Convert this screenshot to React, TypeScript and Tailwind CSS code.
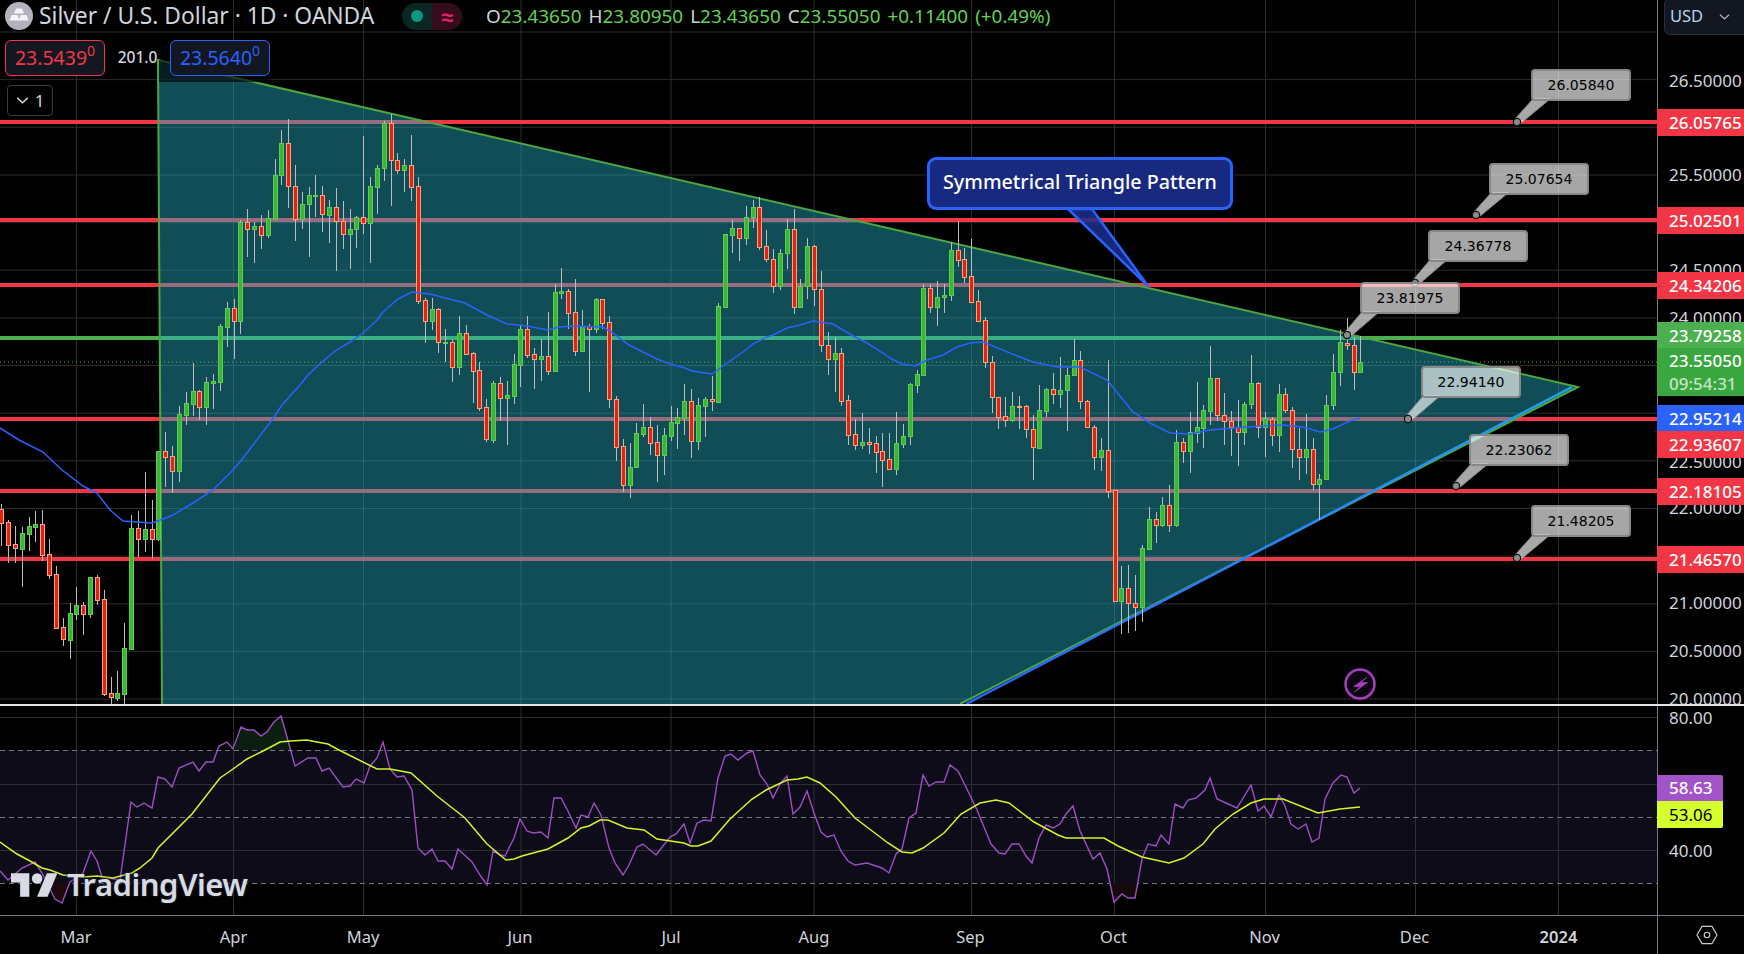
import React from "react";

// [wickTop, bodyTop, bodyBottom, wickBottom, isUp]
const candles: number[][] = [
[504,509,523,546,0],[520,522,545,563,0],[526,544,548,563,0],[527,533,549,587,1],[517,526,534,551,1],[511,524,527,542,1],[510,524,555,561,0],[539,554,575,579,0],[566,574,628,628,0],[618,627,639,646,0],
[603,613,640,659,1],[587,605,614,620,1],[602,605,614,635,0],[577,577,614,618,1],[575,577,600,605,0],[590,599,694,696,0],[677,693,697,705,0],[671,693,698,701,1],[623,648,694,705,1],[515,528,649,649,1],
[511,528,539,557,0],[472,529,539,552,1],[500,529,539,559,0],[451,451,539,541,1],[432,451,457,487,0],[446,456,471,493,0],[406,414,471,482,1],[392,403,415,425,1],[363,391,404,416,1],[390,391,407,420,0],
[377,382,407,425,1],[374,381,383,409,1],[324,326,382,391,1],[302,308,327,347,1],[299,308,321,359,0],[220,222,321,334,1],[209,222,229,257,0],[222,226,229,263,1],[215,226,235,249,0],[210,218,235,238,1],
[159,175,219,219,1],[130,143,175,185,1],[119,143,186,208,0],[165,186,219,241,0],[192,204,219,229,1],[187,195,204,257,1],[175,195,196,217,1],[186,195,214,232,0],[200,207,215,243,1],[188,207,221,271,0],
[201,221,234,249,0],[209,229,234,269,1],[216,217,229,248,1],[136,217,223,234,0],[177,186,223,263,1],[165,168,187,214,1],[121,123,168,181,1],[114,123,160,206,0],[153,160,170,174,0],[159,165,170,192,1],
[135,165,187,201,0],[177,186,301,304,0],[298,300,321,343,0],[298,309,321,330,1],[308,309,342,353,0],[329,342,343,362,1],[340,342,367,382,0],[316,333,367,375,1],[325,333,354,355,0],[352,353,371,403,0],
[362,370,408,411,0],[399,407,439,442,0],[381,383,440,443,1],[377,383,398,421,0],[381,395,398,445,1],[354,364,396,404,1],[325,329,365,387,1],[316,329,355,358,0],[348,354,359,389,0],[339,356,359,381,1],
[312,356,371,375,0],[284,292,371,372,1],[268,291,293,299,1],[289,291,313,329,0],[279,312,351,356,0],[310,326,351,351,1],[324,326,329,392,0],[298,299,329,333,1],[299,299,323,329,0],[316,322,399,408,0],
[396,399,447,461,0],[439,446,485,492,0],[443,467,485,498,1],[423,433,467,467,1],[404,427,434,437,1],[417,427,443,455,0],[425,442,455,482,0],[428,435,455,475,1],[406,422,436,441,1],[408,417,423,449,1],
[384,401,418,435,1],[389,401,441,458,0],[398,405,441,450,1],[397,399,406,437,1],[376,399,401,411,0],[303,306,402,402,1],[234,234,307,308,1],[220,228,235,253,1],[228,228,238,261,0],[206,217,238,245,1],
[200,207,217,228,1],[197,207,247,250,0],[230,246,259,262,0],[249,259,286,293,0],[249,253,286,290,1],[219,229,253,269,1],[209,229,307,314,0],[279,286,307,307,1],[238,246,286,299,1],[245,246,289,306,0],
[271,289,345,352,0],[332,345,359,375,0],[337,353,359,392,1],[348,353,401,406,0],[395,400,435,445,0],[419,434,445,450,0],[413,442,445,449,1],[428,442,444,454,0],[436,443,452,473,0],[433,451,460,487,0],
[433,459,469,469,0],[412,443,469,475,1],[424,436,444,448,1],[383,384,436,445,1],[370,374,385,393,1],[284,288,375,376,1],[284,288,307,313,0],[281,297,307,326,1],[284,295,297,313,1],[242,250,295,301,1],
[221,250,260,267,0],[248,259,277,283,0],[239,276,302,303,0],[290,301,321,322,0],[317,320,362,368,0],[356,362,397,413,0],[397,397,417,429,0],[397,416,420,427,0],[392,406,420,422,1],[396,406,407,429,0],
[405,406,429,438,0],[415,429,447,480,0],[385,410,448,449,1],[388,389,411,417,1],[373,389,394,404,0],[357,390,394,408,1],[368,375,390,431,1],[339,360,375,376,1],[351,360,401,409,0],[400,401,427,427,0],
[425,427,457,470,0],[438,450,457,471,1],[360,450,491,498,0],[490,490,601,601,0],[566,588,601,634,1],[565,588,603,633,0],[575,603,607,631,0],[545,548,607,622,1],[507,519,549,549,1],[512,519,525,543,0],
[497,505,525,527,1],[485,505,525,532,0],[430,442,525,527,1],[438,442,451,463,0],[412,432,451,473,1],[382,427,433,443,1],[405,410,428,448,1],[346,378,411,425,1],[378,378,415,421,0],[393,415,421,445,0],
[411,421,427,456,0],[400,427,432,466,0],[402,404,432,445,1],[355,383,404,409,1],[382,383,427,438,0],[412,418,427,457,1],[417,419,435,446,0],[384,394,435,452,1],[388,394,410,413,0],[407,410,449,468,0],
[428,449,457,480,0],[414,449,457,474,1],[438,449,484,490,0],[474,479,484,520,1],[395,405,479,479,1],[354,372,405,410,1],[330,342,372,386,1],[318,343,345,350,0],[337,345,372,390,0],[336,362,372,373,1],
];

const ma = "0,428 19,440 43,452 62,470 83,486 97,493 110,510 123,521 152,523 163,519 173,515 193,503 213,490 230,473 240,462 272,420 282,405 300,385 308,375 322,362 335,351 350,342 363,333 377,320 383,312 398,299 412,292 430,294 453,300 465,303 487,315 507,324 527,326 548,330 560,327 573,326 603,327 613,333 629,345 657,359 670,364 685,368 692,371 712,374 730,361 743,352 753,344 767,337 773,335 787,328 800,325 813,321 833,324 853,336 867,343 883,353 890,358 902,364 915,366 927,360 943,355 957,347 970,343 983,342 1020,357 1033,362 1057,367 1080,367 1107,380 1133,412 1150,423 1170,433 1190,434 1210,430 1247,427 1283,425 1303,427 1320,432 1333,429 1350,421 1360,418";

const rsi = "0,871 8,880 22,868 35,862 42,873 55,899 62,903 70,882 83,873 91,851 97,861 102,877 120,880 131,802 137,807 144,803 152,808 158,777 165,779 172,787 179,768 193,762 199,771 206,762 213,762 219,746 227,742 233,749 241,727 247,730 254,730 261,736 267,732 274,722 281,716 287,737 295,766 308,758 316,758 322,771 329,768 343,787 350,786 356,779 364,783 370,766 377,758 383,742 390,769 397,777 404,776 412,790 418,848 425,855 432,849 438,861 445,861 452,869 458,849 472,862 480,875 487,885 493,851 500,855 505,856 514,838 520,819 527,831 533,833 541,832 548,838 554,798 561,798 568,811 576,828 581,815 588,817 594,803 601,815 609,848 615,863 623,875 629,865 637,847 643,844 656,855 670,837 676,834 684,824 690,843 697,823 704,820 711,821 718,778 725,756 731,754 738,760 747,753 753,751 760,775 767,784 773,798 780,784 787,776 793,814 800,807 807,791 814,813 821,832 827,837 834,835 841,851 848,861 855,865 867,863 882,868 889,873 896,854 902,849 909,818 916,813 923,775 929,786 936,782 944,782 950,765 958,771 965,785 977,810 991,844 999,853 1005,854 1012,844 1019,844 1026,856 1032,863 1039,838 1046,825 1053,828 1060,824 1066,814 1073,806 1080,831 1093,859 1100,853 1107,869 1114,902 1122,894 1128,898 1135,898 1142,859 1148,844 1156,846 1161,835 1169,844 1175,804 1183,808 1188,800 1196,798 1205,790 1210,778 1217,799 1226,803 1237,808 1251,785 1258,811 1264,806 1271,817 1279,795 1285,806 1291,824 1298,829 1306,824 1312,842 1319,838 1325,799 1333,783 1341,775 1347,777 1354,793 1360,788";

const rsiMa = "0,842 17,854 30,861 42,868 50,870 63,875 83,877 97,876 113,878 132,873 140,868 152,858 158,848 192,814 220,778 233,769 247,759 263,751 280,742 290,741 307,740 317,742 328,744 337,749 377,769 390,769 411,773 437,796 465,818 487,844 500,855 506,860 514,859 522,856 548,849 568,838 581,828 589,826 600,820 608,820 627,828 644,830 657,839 684,843 691,846 698,846 711,841 730,819 752,799 766,790 787,780 798,779 807,777 820,783 836,797 855,818 888,843 902,852 912,853 923,848 944,833 961,814 980,803 996,800 1009,803 1034,822 1058,835 1066,838 1104,838 1118,846 1142,857 1169,863 1184,858 1203,844 1215,829 1233,814 1251,803 1264,799 1283,799 1318,813 1340,809 1360,807";

const gridH = [32, 79.6, 127.3, 175, 222.6, 270.2, 317.9, 365.5, 413.2, 460.8, 508.5, 556.1, 603.8, 651.4, 699];
const gridV = [76.5, 233.5, 363.5, 521, 671, 814, 971.5, 1114.5, 1265.5, 1415.5, 1558.5];

const priceTicks = [
  ["26.50000", 81], ["25.50000", 175], ["24.50000", 270], ["24.00000", 318], ["22.50000", 462],
  ["22.00000", 508], ["21.00000", 603], ["20.50000", 651], ["20.00000", 699],
] as [string, number][];

const priceTags = [
  ["26.05765", 109, "bg-[#f23645]"], ["25.02501", 207, "bg-[#f23645]"], ["24.34206", 272, "bg-[#f23645]"],
  ["23.79258", 322, "bg-[#4caf50]"], ["22.95214", 405, "bg-[#2962ff]"], ["22.93607", 431, "bg-[#f23645]"],
  ["22.18105", 478, "bg-[#f23645]"], ["21.46570", 546, "bg-[#f23645]"],
] as [string, number, string][];

const callouts = [
  ["26.05840", 1531, 69, 1517, 122], ["25.07654", 1489, 163, 1476, 215], ["24.36778", 1428, 230, 1415, 283],
  ["23.81975", 1360, 282, 1347, 335], ["22.94140", 1421, 366, 1408, 419], ["22.23062", 1469, 434, 1456, 486],
  ["21.48205", 1531, 505, 1517, 558],
] as [string, number, number, number, number][];

const months = [["Mar", 76], ["Apr", 233.5], ["May", 363], ["Jun", 520], ["Jul", 671], ["Aug", 814], ["Sep", 970.5], ["Oct", 1113.5], ["Nov", 1264.5], ["Dec", 1414.5], ["2024", 1558.5]] as [string, number][];

function PriceChart() {
  return (
    <svg viewBox="0 0 1657 704" className="block w-full h-full">
      <defs>
        <linearGradient id="tl" x1="0" y1="1" x2="1" y2="0">
          <stop offset="0" stopColor="#2962ff" />
          <stop offset="1" stopColor="#22a0ee" />
        </linearGradient>
      </defs>
      {gridH.map((y) => <line key={y} x1={0} x2={1657} y1={y} y2={y} stroke="#2c2c2c" strokeWidth={1} />)}
      {gridV.map((x) => <line key={x} x1={x} x2={x} y1={0} y2={704} stroke="#2c2c2c" strokeWidth={1} />)}
      {[122, 220, 285, 419, 491, 559].map((y) => <line key={y} x1={0} x2={1657} y1={y} y2={y} stroke="#f23645" strokeWidth={4} />)}
      <line x1={0} x2={1657} y1={338} y2={338} stroke="#4caf50" strokeWidth={4} />
      <polygon points="158,60 1578,387 960,704 162,704" fill="#25b0c6" fillOpacity={0.44} />
      <polyline points="162,704 158,60 1578,387 960,704" fill="none" stroke="#4aa83e" strokeWidth={2} />
      <line x1={966} y1={704} x2={1572} y2={387} stroke="url(#tl)" strokeWidth={2.5} />
      <rect x={159} y={60} width={112} height={22} fill="#000" fillOpacity={0.62} />
      <line x1={0} x2={1657} y1={362} y2={362} stroke="#4caf50" strokeWidth={1} strokeDasharray="1 3" />
      {candles.map((c, i) => {
        const x = Math.round(1.3 + 6.83 * i) + 0.5;
        const up = c[4] === 1;
        const h = Math.max(c[2] - c[1], 1);
        return (
          <g key={i}>
            <line x1={x} x2={x} y1={c[0]} y2={c[3]} stroke="#bdbdbd" strokeWidth={1} />
            <rect x={x - 2} y={c[1] + 0.5} width={4} height={h} fill={up ? "#3cb43c" : "#dd2418"} stroke={up ? "#5ccf4a" : "#ffa274"} strokeWidth={1} />
          </g>
        );
      })}
      <polyline points={ma} fill="none" stroke="#2962ff" strokeWidth={1.5} />
      {/* callout tail */}
      <polygon points="1068,209 1092,209 1148,286" fill="#1a2f8c" fillOpacity={0.85} stroke="#2962ff" strokeWidth={2.5} strokeLinejoin="round" />
      {callouts.map(([t, bx, by, ax, ay]) => (
        <g key={t}>
          <polygon points={`${bx + 2},${by + 30} ${bx + 19},${by + 30} ${ax + 3},${ay + 2} ${ax - 2},${ay - 3}`} fill="#fff" fillOpacity={0.66} stroke="#888" strokeWidth={1} />
          <circle cx={ax} cy={ay} r={3.6} fill="#8c8c8c" stroke="#111" strokeWidth={1.2} />
        </g>
      ))}
      {/* bolt */}
      <circle cx={1360} cy={684} r={14.5} fill="#0d0612" stroke="#a53fbe" strokeWidth={2.5} />
      <path d="M1367 677.5 L1353.5 686.5 L1360 686.5 L1354.5 692 L1367.5 682.5 L1361 682.5 Z" fill="#a53fbe" stroke="#a53fbe" strokeWidth={0.6} />
    </svg>
  );
}

function RsiChart() {
  return (
    <svg viewBox="0 706 1657 209" className="block w-full h-full">
      <rect x={0} y={750} width={1657} height={133} fill="#0e0c18" />
      {[717, 784, 850].map((y) => <line key={y} x1={0} x2={1657} y1={y + 0.5} y2={y + 0.5} stroke="#2e2e33" strokeWidth={1} />)}
      {gridV.map((x) => <line key={x} x1={x} x2={x} y1={706} y2={915} stroke="#2e2e33" strokeWidth={1} />)}
      {[750, 817, 883].map((y) => <line key={y} x1={0} x2={1657} y1={y + 0.5} y2={y + 0.5} stroke="#77757f" strokeWidth={1} strokeDasharray="5 4" />)}
      <polygon points="234,750 241,727 247,730 254,730 261,736 267,732 274,722 281,716 287,737 291,750" fill="#0b1e10" />
      <polygon points="46,883 55,899 62,903 68,883" fill="#1e0a0b" />
      <polygon points="1109,883 1114,902 1122,894 1128,898 1135,898 1138,883" fill="#160a0b" />
      <polyline points={rsi} fill="none" stroke="#9c4fc4" strokeWidth={1.4} />
      <polyline points={rsiMa} fill="none" stroke="#d4f52a" strokeWidth={1.5} />
    </svg>
  );
}

function TvMark() {
  return (
    <svg viewBox="0 4 36 18" className="w-[47px] h-[24px]" aria-hidden>
      <path d="M14 22H7V11H0V4h14v18z" fill="#d8dbe3" stroke="#1e222d" strokeWidth={0.6} paintOrder="stroke" />
      <path d="M28 22h-8l7.5-18h8L28 22z" fill="#d8dbe3" stroke="#1e222d" strokeWidth={0.6} paintOrder="stroke" />
      <circle cx={20} cy={8} r={4} fill="#d8dbe3" stroke="#1e222d" strokeWidth={0.6} paintOrder="stroke" />
    </svg>
  );
}

function SilverLogo() {
  return (
    <svg viewBox="0 0 28 28" className="w-[28px] h-[28px] shrink-0" aria-hidden>
      <circle cx={14} cy={14} r={14} fill="#b2b3bd" />
      <path d="M11 6.5h6l2 5h-10z" fill="#f4f4f6" />
      <path d="M6.5 13h6l2 5.5h-10z" fill="#f4f4f6" />
      <path d="M15.5 13h6l2 5.5h-10z" fill="#f4f4f6" />
    </svg>
  );
}

function Ohlc({ k, v }: { k: string; v: string }) {
  return (
    <span className="flex">
      <span className="text-[#d1d4dc]">{k}</span>
      <span>{v}</span>
    </span>
  );
}

export default function App() {
  return (
    <div className="relative flex flex-col w-[1744px] h-[954px] overflow-hidden bg-black font-['Noto_Sans','Liberation_Sans',sans-serif] text-[#d1d4dc]">
      {/* main pane */}
      <div className="flex h-[704px] overflow-hidden">
        <div className="relative w-[1657px] shrink-0">
          <PriceChart />

          <div className="absolute left-[927px] top-[157px] flex h-[53px] w-[306px] items-center justify-center rounded-[9px] border-[3px] border-[#2962ff] bg-[#172a80] pb-[3px] text-[19.7px] font-medium text-white">
            Symmetrical Triangle Pattern
          </div>

          {callouts.map(([t, bx, by]) => (
            <div
              key={t}
              style={{ left: bx, top: by }}
              className="absolute flex h-[32px] w-[100px] items-center justify-center rounded-[4px] border-[2.5px] border-[#878787] bg-white/65 font-['DejaVu_Sans',sans-serif] text-[14px] text-black"
            >
              {t}
            </div>
          ))}

          {/* legend */}
          <div className="absolute left-[5px] top-[2px] flex flex-col items-start">
            <div className="flex h-[28px] items-center">
              <SilverLogo />
              <span className="ml-[6px] w-[363px] whitespace-nowrap text-[22.8px] leading-none">Silver / U.S. Dollar · 1D · OANDA</span>
              <span className="flex h-[27px] w-[60px] overflow-hidden rounded-full">
                <span className="flex w-[30px] items-center justify-center bg-[#0a2724]">
                  <span className="size-[12px] rounded-full bg-[#089981]" />
                </span>
                <span className="flex w-[30px] items-center justify-center bg-[#350c1c] text-[22px] font-semibold leading-none text-[#e91e63]">≈</span>
              </span>
              <span className="ml-[24px] flex gap-[7px] whitespace-nowrap text-[18.9px] leading-none text-[#62d154]">
                <Ohlc k="O" v="23.43650" />
                <Ohlc k="H" v="23.80950" />
                <Ohlc k="L" v="23.43650" />
                <Ohlc k="C" v="23.55050" />
                <span>+0.11400</span>
                <span>(+0.49%)</span>
              </span>
            </div>
            <div className="mt-[10px] flex items-center">
              <span className="flex h-[36px] w-[100px] items-center justify-center rounded-[6px] border border-[#f23645] bg-[#131722] text-[19.5px] text-[#f23645]">
                23.5439<sup className="text-[14px] leading-none">0</sup>
              </span>
              <span className="w-[65px] text-center text-[15.5px] font-medium">201.0</span>
              <span className="flex h-[36px] w-[100px] items-center justify-center rounded-[6px] border border-[#2962ff] bg-[#131722] text-[19.5px] text-[#2962ff]">
                23.5640<sup className="text-[14px] leading-none">0</sup>
              </span>
            </div>
            <div className="ml-[2px] mt-[9px] flex h-[31px] w-[46px] items-center justify-center gap-[6px] rounded-[4px] border border-[#363a45] bg-black text-[17px]">
              <svg viewBox="0 0 14 8" className="h-[7px] w-[13px]" fill="none" stroke="#d1d4dc" strokeWidth={1.6} aria-hidden>
                <path d="M1 1l6 5.5L13 1" />
              </svg>
              1
            </div>
          </div>
        </div>

        {/* price axis */}
        <div className="relative w-[87px] shrink-0 border-l border-[#787b86] bg-black">
          {priceTicks.map(([t, y]) => (
            <div key={t} style={{ top: y - 12 }} className="absolute left-[11px] h-[24px] text-[17px] leading-[24px] text-[#d1d4dc]">{t}</div>
          ))}
          {priceTags.map(([t, y, c]) => (
            <div key={t} className={`absolute left-[-1px] right-0 flex h-[27px] items-center pl-[12px] text-[17px] font-medium text-white ${c}`} style={{ top: y }}>{t}</div>
          ))}
          <div className="absolute left-[-1px] right-0 top-[348px] flex h-[48px] flex-col justify-center bg-[#3aa640] pl-[12px] text-[17px] font-medium leading-[23px] text-white">
            <span>23.55050</span>
            <span className="text-[#c4e4c6]">09:54:31</span>
          </div>
          <div className="absolute left-[6px] right-[-8px] top-[-2px] flex h-[37px] items-center gap-[16px] rounded-[6px] border border-[#2a2e39] bg-[#131722] pl-[5px] text-[16.5px] text-[#b7d3ec]">
            USD
            <svg viewBox="0 0 14 8" className="h-[6px] w-[11px]" fill="none" stroke="#b2b5be" strokeWidth={1.8} aria-hidden>
              <path d="M1 1l6 5.5L13 1" />
            </svg>
          </div>
        </div>
      </div>

      {/* separator */}
      <div className="h-[2px] shrink-0 bg-[#e3e4ea]" />

      {/* RSI pane */}
      <div className="flex h-[209px] shrink-0">
        <div className="w-[1657px] shrink-0">
          <RsiChart />
        </div>
        <div className="relative w-[87px] shrink-0 border-l border-[#787b86]">
          <div className="absolute left-[11px] top-[0px] text-[17px] leading-[24px]">80.00</div>
          <div className="absolute left-[11px] top-[133px] text-[17px] leading-[24px]">40.00</div>
          <div className="absolute left-[-1px] top-[69px] flex h-[26px] w-[66px] items-center rounded-tr-[2px] bg-[#a154c8] pl-[12px] text-[17px] font-medium text-white">58.63</div>
          <div className="absolute left-[-1px] top-[95px] flex h-[27px] w-[66px] items-center rounded-br-[2px] bg-[#d6ff2e] pl-[12px] text-[17px] text-black">53.06</div>
        </div>
      </div>

      {/* time axis */}
      <div className="flex h-[39px] shrink-0 border-t border-[#787b86]">
        <div className="relative w-[1657px] shrink-0">
          {months.map(([t, x]) => (
            <span key={t} style={{ left: x }} className={`absolute top-[9px] -translate-x-1/2 text-[16.5px] leading-[24px] text-[#d1d4dc] ${t === "2024" ? "font-semibold" : ""}`}>{t}</span>
          ))}
        </div>
        <div className="flex w-[87px] shrink-0 items-center justify-start border-l border-[#787b86] pl-[38px]">
          <svg viewBox="0 0 24 22" className="h-[20px] w-[22px]" fill="none" stroke="#c8cad0" strokeWidth={1.3} aria-hidden>
            <path d="M6.5 1.5h11L23 11l-5.5 9.5h-11L1 11z" />
            <circle cx={12} cy={11} r={3} />
          </svg>
        </div>
      </div>

      {/* watermark */}
      <div className="absolute left-[11px] top-[869px] flex items-center gap-[9px]">
        <TvMark />
        <span className="text-[31px] font-semibold leading-none tracking-[-0.5px] text-[#d8dbe3] [text-shadow:0_0_3px_#1e222d,0_0_3px_#1e222d]">TradingView</span>
      </div>
    </div>
  );
}
